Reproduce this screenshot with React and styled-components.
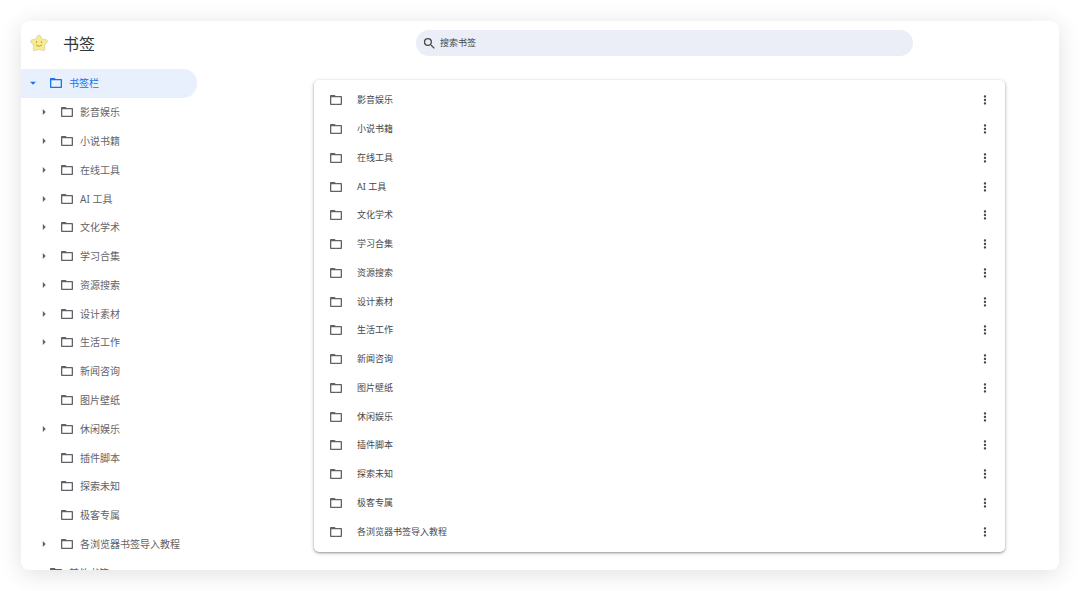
import { useState } from "react";
import { MdArrowDropDown, MdArrowRight, MdMoreVert, MdSearch } from "react-icons/md";
import styled, { createGlobalStyle } from "styled-components";

const folders = [
    { name: "影音娱乐", nested: true },
    { name: "小说书籍", nested: true },
    { name: "在线工具", nested: true },
    { name: "AI 工具", nested: true },
    { name: "文化学术", nested: true },
    { name: "学习合集", nested: true },
    { name: "资源搜索", nested: true },
    { name: "设计素材", nested: true },
    { name: "生活工作", nested: true },
    { name: "新闻咨询", nested: false },
    { name: "图片壁纸", nested: false },
    { name: "休闲娱乐", nested: true },
    { name: "插件脚本", nested: false },
    { name: "探索未知", nested: false },
    { name: "极客专属", nested: false },
    { name: "各浏览器书签导入教程", nested: true },
];

const GlobalStyle = createGlobalStyle`
    * {
        box-sizing: border-box;
    }

    body {
        margin: 0;
        background: #fff;
        font-family: "Noto Sans", "Noto Sans CJK SC", sans-serif;
        color: #45484b;
    }

    button,
    input {
        font: inherit;
        color: inherit;
        border: none;
        background: none;
        padding: 0;
    }

    button {
        cursor: pointer;
    }
`;

const Page = styled.div`
    height: 100vh;
    padding: 21px;
`;

const Window = styled.div`
    height: 100%;
    display: flex;
    flex-direction: column;
    border-radius: 8px;
    background: #fff;
    box-shadow: 0 4px 24px rgba(0, 0, 0, 0.12);
    overflow: hidden;
`;

const Header = styled.header`
    display: grid;
    grid-template-columns: 176px 1fr;
    align-items: center;
    height: 44px;
    margin-bottom: 4px;
    flex-shrink: 0;
`;

const Brand = styled.div`
    display: flex;
    align-items: center;
    gap: 15px;
    padding-left: 9px;
`;

const Title = styled.h1`
    margin: 0;
    padding-top: 2px;
    font-size: 16px;
    line-height: 24px;
    font-weight: 400;
    color: #333639;
`;

const SearchBox = styled.label`
    display: flex;
    align-items: center;
    gap: 3px;
    height: 26px;
    margin: 0 146px 0 219px;
    padding: 0 12px 0 6px;
    border-radius: 13px;
    background: #ebeef7;
    color: #474747;

    input {
        flex: 1;
        min-width: 0;
        font-size: 9px;
        line-height: 16px;
        outline: none;
    }

    input::placeholder {
        color: #474747;
        opacity: 1;
    }
`;

const Body = styled.div`
    flex: 1;
    min-height: 0;
    display: grid;
    grid-template-columns: 176px 1fr;
`;

/* 最后一行超出窗口底部,被裁掉一部分 */
const Tree = styled.nav`
    display: flex;
    flex-direction: column;
    margin-bottom: -17px;
`;

const TreeRow = styled.button`
    flex: 1;
    min-height: 0;
    display: flex;
    align-items: center;
    padding-left: ${({ $level }) => ($level ? 16 : 5)}px;
    border-radius: 0 14px 14px 0;
    background: ${({ $active }) => ($active ? "#e8f0fe" : "transparent")};
    color: ${({ $active }) => ($active ? "#1a73e8" : "#5f6368")};
    font-size: 10px;
    line-height: 16px;
    white-space: nowrap;
`;

const Arrow = styled.span`
    display: flex;
    width: 14px;
    margin-right: 9px;
`;

const TreeLabel = styled.span`
    margin-left: 6px;
`;

const Main = styled.main`
    display: flex;
    min-height: 0;
    padding: 11px 54px 18px 117px;
`;

const Card = styled.ul`
    flex: 1;
    display: flex;
    flex-direction: column;
    margin: 0;
    padding: 6px 0;
    list-style: none;
    border-radius: 5px;
    background: #fff;
    box-shadow:
        0 1px 2px rgba(60, 64, 67, 0.4),
        0 1px 4px rgba(60, 64, 67, 0.25);
`;

const Item = styled.li`
    flex: 1;
    min-height: 0;
    display: flex;
    align-items: center;
    gap: 14px;
    padding: 0 13px 0 15px;
    font-size: 9px;
    line-height: 16px;

    > svg {
        color: #5f6368;
    }
`;

const ItemName = styled.span`
    flex: 1;
`;

const MenuButton = styled.button`
    display: flex;
`;

const FolderIcon = () => (
    <svg width="14" height="14" viewBox="0 0 14 14" aria-hidden="true">
        <path
            fill="currentColor"
            fillRule="evenodd"
            d="M1.800 2H5.600L6.800 3H12.200Q13 3 13 3.800V11.200Q13 12 12.200 12H1.800Q1 12 1 11.200V2.800Q1 2 1.800 2ZM2.300 4.200V10.700H11.700V4.200Z"
        />
    </svg>
);

const StarLogo = () => (
    <svg width="18" height="18" viewBox="0 0 36 36" aria-hidden="true">
        <path
            d="M18 5l5 7.500 9 2-6 7.500 1 8.500-9-2.500-9 2.500 1-8.500-6-7.500 9-2z"
            fill="#f8ec8c"
            stroke="#d9d4b4"
            strokeWidth="7"
            strokeLinejoin="round"
        />
        <path
            d="M18 5l5 7.500 9 2-6 7.500 1 8.500-9-2.500-9 2.500 1-8.500-6-7.500 9-2z"
            fill="#f8ec8c"
            stroke="#f8ec8c"
            strokeWidth="4"
            strokeLinejoin="round"
        />
        <circle cx="13" cy="16" r="1.300" fill="#8f8040" />
        <circle cx="23" cy="16" r="1.300" fill="#8f8040" />
        <path d="M12 22q6 5 12 0" fill="none" stroke="#b09a45" strokeWidth="1.800" />
    </svg>
);

const TreeItem = ({ name, level, active, icon, onClick }) => (
    <TreeRow type="button" $level={level} $active={active} onClick={onClick}>
        <Arrow>{icon}</Arrow>
        <FolderIcon />
        <TreeLabel>{name}</TreeLabel>
    </TreeRow>
);

const App = () => {
    const [selected, setSelected] = useState("书签栏");

    return (
        <>
            <GlobalStyle />
            <Page>
                <Window>
                    <Header>
                        <Brand>
                            <StarLogo />
                            <Title>书签</Title>
                        </Brand>
                        <SearchBox>
                            <MdSearch size={15} />
                            <input type="text" placeholder="搜索书签" aria-label="搜索书签" />
                        </SearchBox>
                    </Header>
                    <Body>
                        <Tree>
                            <TreeItem
                                name="书签栏"
                                level={0}
                                active={selected === "书签栏"}
                                icon={<MdArrowDropDown size={14} />}
                                onClick={() => setSelected("书签栏")}
                            />
                            {folders.map(({ name, nested }) => (
                                <TreeItem
                                    key={name}
                                    name={name}
                                    level={1}
                                    active={selected === name}
                                    icon={nested && <MdArrowRight size={14} />}
                                    onClick={() => setSelected(name)}
                                />
                            ))}
                            <TreeItem
                                name="其他书签"
                                level={0}
                                active={selected === "其他书签"}
                                onClick={() => setSelected("其他书签")}
                            />
                        </Tree>
                        <Main>
                            <Card>
                                {folders.map(({ name }) => (
                                    <Item key={name}>
                                        <FolderIcon />
                                        <ItemName>{name}</ItemName>
                                        <MenuButton type="button" aria-label={`${name} 更多操作`}>
                                            <MdMoreVert size={14} />
                                        </MenuButton>
                                    </Item>
                                ))}
                            </Card>
                        </Main>
                    </Body>
                </Window>
            </Page>
        </>
    );
};

export default App;
